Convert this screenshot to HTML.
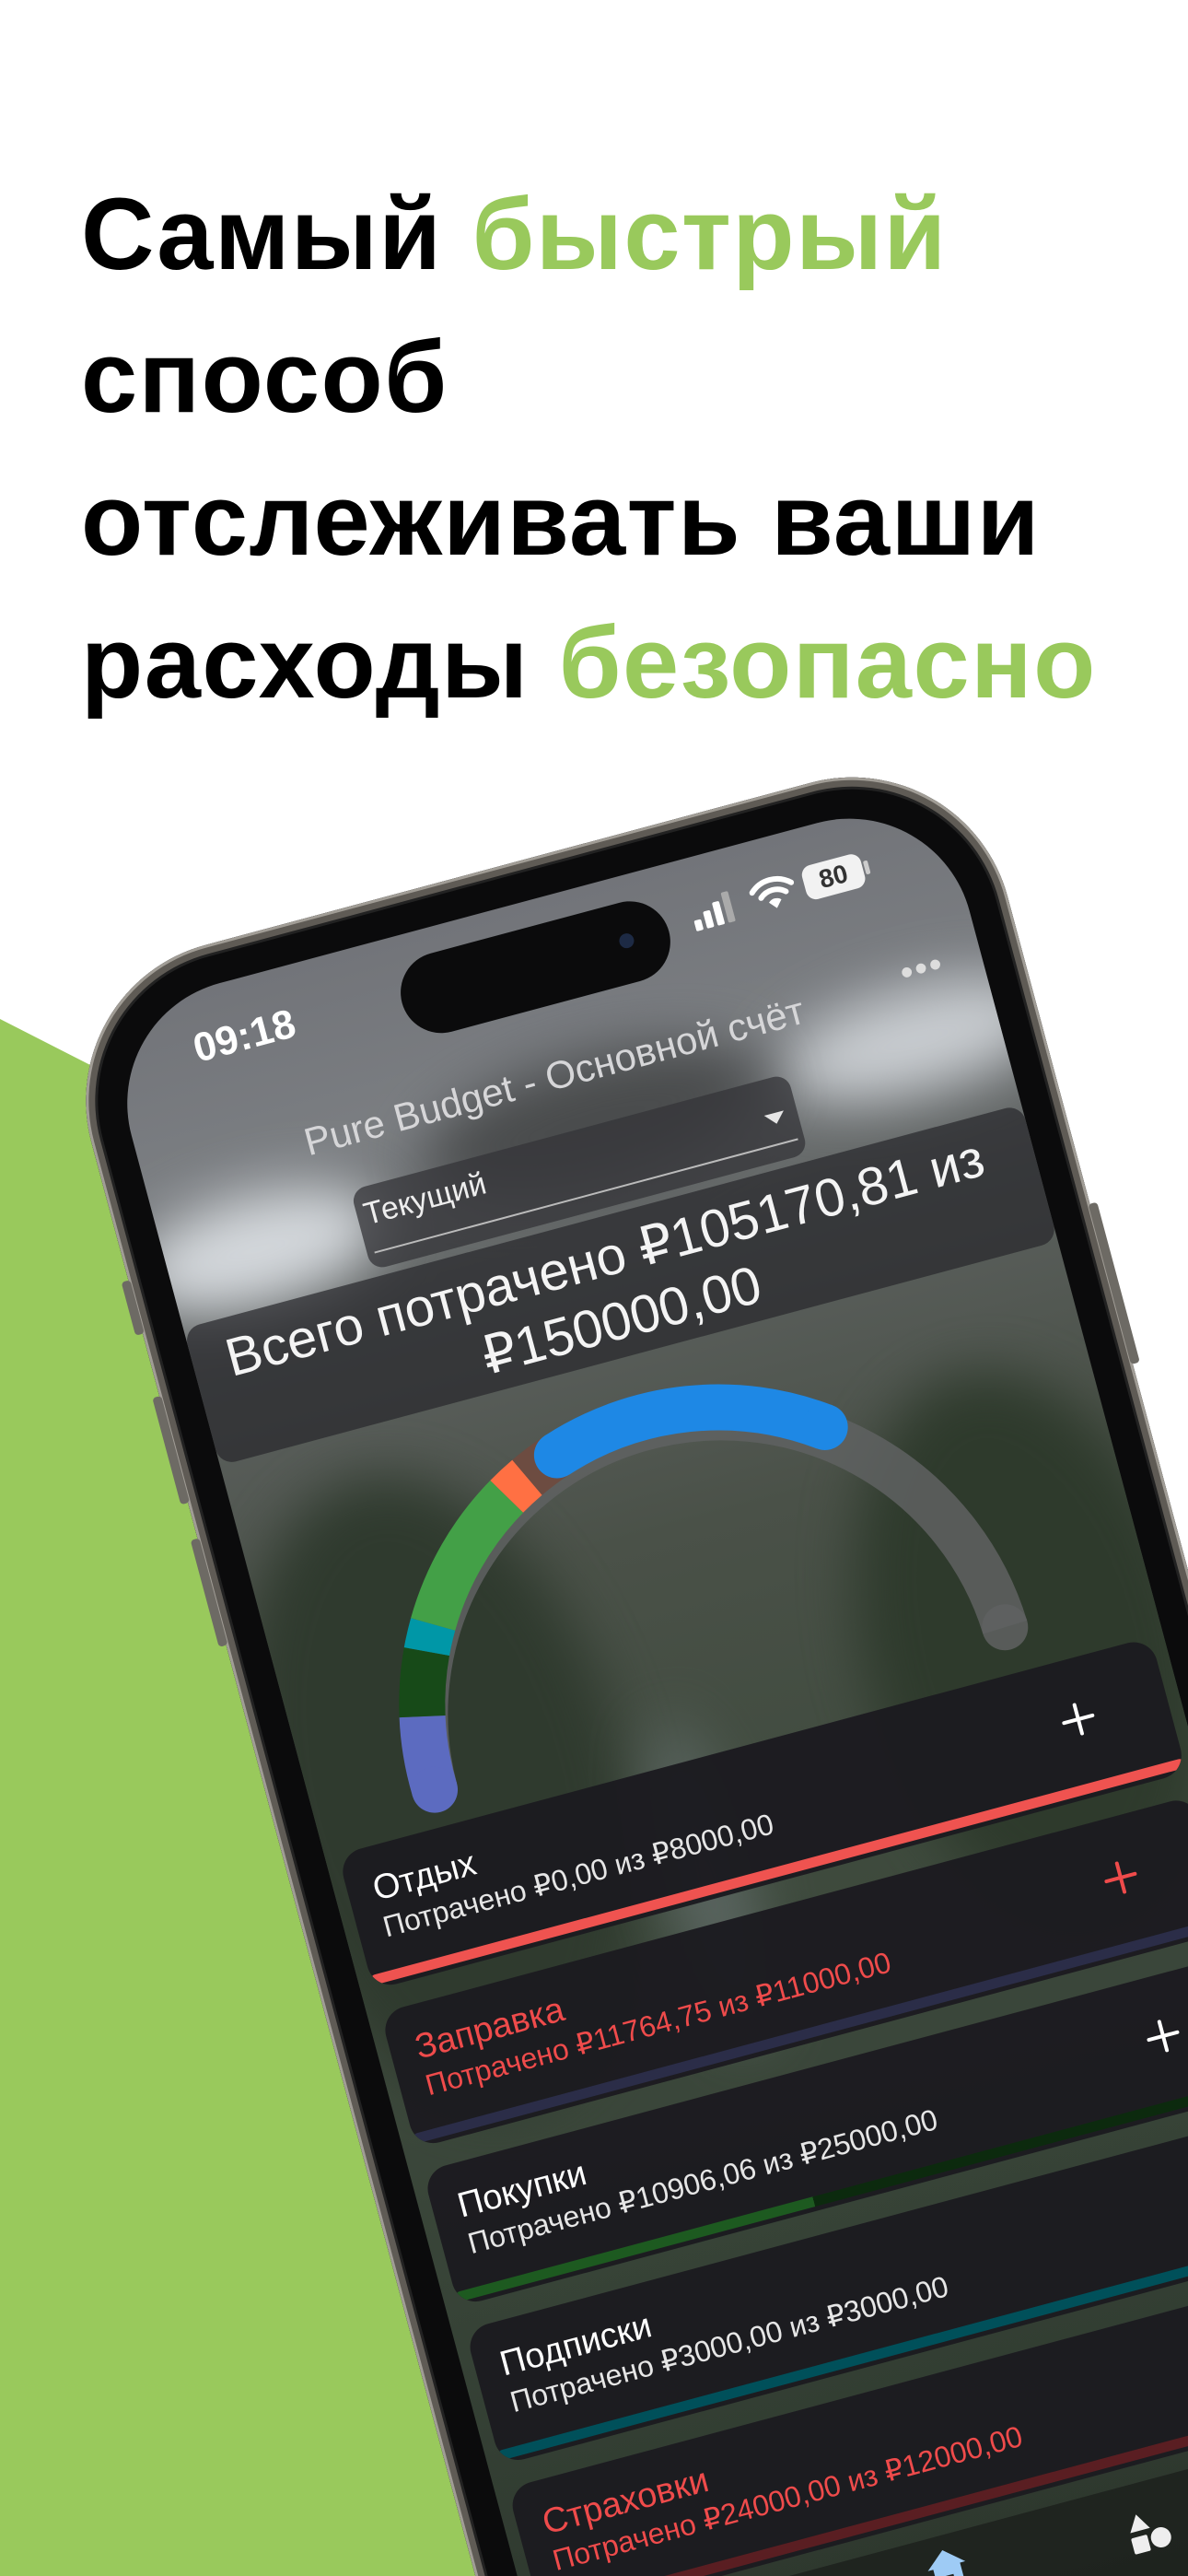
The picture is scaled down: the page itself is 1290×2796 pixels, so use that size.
<!DOCTYPE html>
<html><head><meta charset="utf-8">
<style>
*{margin:0;padding:0;box-sizing:border-box}
html,body{width:1290px;height:2796px;overflow:hidden;background:#fff;font-family:"Liberation Sans",sans-serif}
#wrap{position:relative;width:1290px;height:2796px;overflow:hidden;background:#fff;contain:strict;clip-path:inset(0)}
#green{position:absolute;left:0;top:0;width:1290px;height:2796px;background:#99c95c;clip-path:polygon(0 1106px,1290px 1764px,1290px 2796px,0 2796px)}
.h{position:absolute;left:88px;font-weight:bold;font-size:110px;letter-spacing:1.5px;color:#000;white-space:nowrap;line-height:1}
.g{color:#99c95c}
#phone{position:absolute;left:54px;top:1071px;width:1030px;height:2110px;transform:rotate(-15deg);transform-origin:0 0;border-radius:175px;background:#0b0b0c;box-shadow:inset 0 0 0 3px #a19d96,inset 0 0 0 10px #5f5b55,inset 0 0 0 13px #222}
.btn{position:absolute;left:-8px;width:10px;background:#6d6a64;border-radius:4px}
#screen{position:absolute;left:44px;top:44px;width:942px;height:2022px;border-radius:135px;overflow:hidden;background:linear-gradient(#727479 0,#7b7e82 200px,#5c605e 420px,#4a5148 700px,#3e4a3d 1100px,#364236 1500px,#2a332a 2022px)}
.blob{position:absolute;border-radius:50%;filter:blur(30px)}
.t{position:absolute;white-space:nowrap;color:#fff}
.card{position:absolute;left:14px;width:914px;height:152px;border-radius:26px;background:rgba(28,27,32,.97);overflow:hidden}
.card .a{position:absolute;left:28px;top:26px;font-size:38px;color:#fff;white-space:nowrap}
.card .b{position:absolute;left:28px;top:70px;font-size:32px;color:#e6e6e6;white-space:nowrap}
.card .bar{position:absolute;left:0;right:0;top:136px;height:11px;border-radius:6px}
.plus{position:absolute;left:797px;top:48px;width:36px;height:36px}
.plus:before,.plus:after{content:"";position:absolute;background:#fff;border-radius:2px}
.plus:before{left:16px;top:0;width:4px;height:36px}
.plus:after{left:0;top:16px;width:36px;height:4px}
.red .plus:before,.red .plus:after{background:#ef4b4b}
.red .a,.red .b{color:#ef4b4b}
</style></head><body>
<div id="wrap">
<div id="green"></div>
<div class="h" style="top:200px">Самый <span class="g">быстрый</span></div>
<div class="h" style="top:355px">способ</div>
<div class="h" style="top:510px">отслеживать ваши</div>
<div class="h" style="top:665px">расходы <span class="g">безопасно</span></div>

<div id="phone">
 <div class="btn" style="top:330px;height:60px"></div>
 <div class="btn" style="top:460px;height:120px"></div>
 <div class="btn" style="top:620px;height:120px"></div>
 <div class="btn" style="left:1028px;top:520px;height:180px"></div>
 <div id="screen">
  <div class="blob" style="left:-40px;top:230px;width:280px;height:120px;background:#d4d8dc"></div>
  <div class="blob" style="left:700px;top:200px;width:300px;height:110px;background:#c9cdd1"></div>
  <div class="blob" style="left:300px;top:180px;width:380px;height:140px;background:#4a4c4d"></div>
  <div class="blob" style="left:-60px;top:560px;width:400px;height:700px;background:#2f3a2e"></div>
  <div class="blob" style="left:620px;top:620px;width:360px;height:600px;background:#2e3a2c"></div>
  <div class="blob" style="left:350px;top:900px;width:90px;height:360px;background:#59645f"></div>

  <div class="t" style="left:90px;top:38px;font-size:44px;font-weight:bold">09:18</div>
  <div style="position:absolute;left:321px;top:28px;width:300px;height:88px;border-radius:44px;background:#0b0b0c"></div>
  <div style="position:absolute;left:566px;top:62px;width:16px;height:16px;border-radius:50%;background:#1d2a44"></div>
  <svg style="position:absolute;left:650px;top:44px" width="60" height="36"><rect x="0" y="24" width="8" height="12" rx="2" fill="#fff"/><rect x="12" y="17" width="8" height="19" rx="2" fill="#fff"/><rect x="24" y="10" width="8" height="26" rx="2" fill="#fff"/><rect x="36" y="2" width="8" height="34" rx="2" fill="#aaa"/></svg>
  <svg style="position:absolute;left:716px;top:42px" width="50" height="38" viewBox="0 0 50 38"><path d="M3 13 A32 32 0 0 1 47 13" stroke="#fff" stroke-width="6" fill="none" stroke-linecap="round"/><path d="M11 21 A21 21 0 0 1 39 21" stroke="#fff" stroke-width="6" fill="none" stroke-linecap="round"/><path d="M25 36 L18 28 A10 10 0 0 1 32 28 Z" fill="#fff"/></svg>
  <div style="position:absolute;left:776px;top:42px;width:66px;height:38px;border-radius:11px;background:#f2f2f2;color:#333;font-size:28px;font-weight:bold;text-align:center;line-height:38px">80</div>
  <div style="position:absolute;left:844px;top:53px;width:5px;height:15px;border-radius:2px;background:#ccc"></div>

  <div class="t" style="left:852px;top:160px;font-size:40px;color:#ddd;letter-spacing:2px">•••</div>
  <div class="t" style="left:0;width:920px;top:168px;text-align:center;font-size:42px;color:#d6d6d8">Pure Budget - Основной счёт</div>

  <div style="position:absolute;left:214px;top:254px;width:491px;height:90px;border-radius:16px;background:rgba(52,52,56,.75)"></div>
  <div class="t" style="left:222px;top:265px;font-size:34px;color:#eee">Текущий</div>
  <div style="position:absolute;left:669px;top:292px;width:0;height:0;border-left:11px solid transparent;border-right:11px solid transparent;border-top:12px solid #e6e6e6"></div>
  <div style="position:absolute;left:222px;top:325px;width:476px;height:2px;background:#bbb"></div>

  <div style="position:absolute;left:0;top:352px;width:942px;height:154px;border-radius:18px;background:rgba(40,40,44,.72)"></div>
  <div class="t" style="left:0;width:924px;top:362px;text-align:center;font-size:58px;line-height:70px;color:#f4f4f4">Всего потрачено ₽105170,81 из<br>₽150000,00</div>

  <svg style="position:absolute;left:0;top:0" width="942" height="1000">
   <g fill="none" stroke-width="50">
    <path d="M134.2 906.1 A322 322 0 0 1 778 896" stroke="rgba(95,97,98,.85)"/>
    <path d="M134.2 906.1 A322 322 0 0 1 141.8 825.8" stroke="#5c6bc0"/>
    <path d="M141.8 825.8 A322 322 0 0 1 164.7 758.9" stroke="#174a18"/>
    <path d="M164.7 758.9 A322 322 0 0 1 178.9 732.1" stroke="#0097a7"/>
    <path d="M178.9 732.1 A322 322 0 0 1 292.1 618.9" stroke="#43a047"/>
    <path d="M292.1 618.9 A322 322 0 0 1 318.9 604.7" stroke="#ff7043"/>
    <path d="M318.9 604.7 A322 322 0 0 1 356.5 589.7" stroke="#6d4c41"/>
    <path d="M356.5 589.7 A322 322 0 0 1 645.3 635.5" stroke="#1e88e5"/>
   </g>
   <circle cx="134.2" cy="906.1" r="25" fill="#5c6bc0"/>
   <circle cx="645.3" cy="635.5" r="25" fill="#1e88e5"/>
   <circle cx="356.5" cy="589.7" r="25" fill="#1e88e5"/>
   <circle cx="778" cy="896" r="25" fill="rgba(95,97,98,.85)"/>
  </svg>

  <div class="card" style="top:947px"><div class="a">Отдых</div><div class="b">Потрачено ₽0,00 из ₽8000,00</div><div class="plus"></div><div class="bar" style="background:#ef5350"></div></div>
  <div class="card red" style="top:1125px"><div class="a">Заправка</div><div class="b">Потрачено ₽11764,75 из ₽11000,00</div><div class="plus"></div><div class="bar" style="background:#2b2d48"></div></div>
  <div class="card" style="top:1303px"><div class="a">Покупки</div><div class="b">Потрачено ₽10906,06 из ₽25000,00</div><div class="plus"></div><div class="bar" style="background:linear-gradient(90deg,#1d5a20 0,#1d5a20 44%,#0c2a0e 44%)"></div></div>
  <div class="card" style="top:1481px"><div class="a">Подписки</div><div class="b">Потрачено ₽3000,00 из ₽3000,00</div><div class="plus"></div><div class="bar" style="background:#00505a"></div></div>
  <div class="card red" style="top:1659px"><div class="a">Страховки</div><div class="b">Потрачено ₽24000,00 из ₽12000,00</div><div class="plus"></div><div class="bar" style="background:#5a1e22"></div></div>

  <div style="position:absolute;left:0;top:1830px;width:942px;height:192px;background:rgba(22,24,22,.6)"></div>
  <svg style="position:absolute;left:428px;top:1842px" width="50" height="50" viewBox="0 0 50 50"><path d="M25 4 L46 22 L40 22 L40 46 L30 46 L30 32 L20 32 L20 46 L10 46 L10 22 L4 22 Z" fill="#9ecbf5"/></svg>
  <svg style="position:absolute;left:650px;top:1860px" width="50" height="50" viewBox="0 0 50 50"><path d="M16 3 L27 21 L5 21 Z" fill="#eee"/><rect x="4" y="27" width="18" height="18" rx="2" fill="#eee"/><circle cx="36" cy="34" r="11" fill="#eee"/></svg>
 </div>
</div>
</div>
</body></html>
